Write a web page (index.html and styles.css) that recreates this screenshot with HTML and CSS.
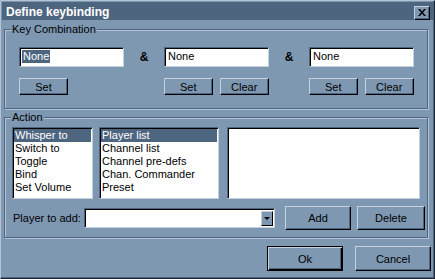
FILE: index.html
```html
<!DOCTYPE html>
<html lang="en">
  <head>
    <meta charset="UTF-8" />
    <title>Define keybinding</title>
    <link rel="stylesheet" href="styles.css">
  </head>
  <body>
    <div class="window">
      <div class="titlebar">
        <span class="title">Define keybinding</span>
        <button class="close-btn" aria-label="Close">
          <svg width="8" height="7" viewBox="0 0 8 7">
            <path d="M0 0h2l2 2.5L6 0h2L5 3.5 8 7H6L4 4.5 2 7H0l3-3.5z" fill="#000" />
          </svg>
        </button>
      </div>
      <div class="client">
        <fieldset class="group">
          <legend>Key Combination</legend>
          <div class="group-body keys">
            <div class="key-col">
              <div class="edit"><span class="sel">None</span></div>
              <div class="btn-row">
                <button class="btn">Set</button>
              </div>
            </div>
            <div class="amp">&amp;</div>
            <div class="key-col">
              <div class="edit"><span>None</span></div>
              <div class="btn-row">
                <button class="btn">Set</button>
                <button class="btn clear">Clear</button>
              </div>
            </div>
            <div class="amp">&amp;</div>
            <div class="key-col">
              <div class="edit"><span>None</span></div>
              <div class="btn-row">
                <button class="btn">Set</button>
                <button class="btn clear">Clear</button>
              </div>
            </div>
          </div>
        </fieldset>
        <fieldset class="group action">
          <legend>Action</legend>
          <div class="group-body">
            <div class="lists">
              <ul class="listbox list-type">
                <li class="selected">Whisper to</li>
                <li>Switch to</li>
                <li>Toggle</li>
                <li>Bind</li>
                <li>Set Volume</li>
              </ul>
              <ul class="listbox list-target">
                <li class="selected">Player list</li>
                <li>Channel list</li>
                <li>Channel pre-defs</li>
                <li>Chan. Commander</li>
                <li>Preset</li>
              </ul>
              <ul class="listbox list-items"></ul>
            </div>
            <div class="player-row">
              <label class="player-label">Player to add:</label>
              <div class="combo">
                <span class="combo-text"></span>
                <span class="combo-arrow"></span>
              </div>
              <button class="btn big add">Add</button>
              <button class="btn big delete">Delete</button>
            </div>
          </div>
        </fieldset>
        <div class="dialog-buttons">
          <button class="btn big default">Ok</button>
          <button class="btn big">Cancel</button>
        </div>
      </div>
    </div>
  </body>
</html>
```

FILE: styles.css
```css
body {
  margin: 0;
  background-color: #7f98b2;
  font-family: "Liberation Sans", Arial, sans-serif;
  font-size: 11px;
  color: #000;
}
.window {
  width: 435px;
  height: 279px;
  box-sizing: border-box;
  background-color: #7f98b2;
  border: 1px solid;
  border-color: #b4c4d4 #1c2631 #1c2631 #b4c4d4;
  box-shadow: inset -1px -1px 0 #4e6580;
  padding: 1px;
}
.titlebar {
  height: 18px;
  background-color: #4e6580;
  display: flex;
  align-items: center;
  justify-content: space-between;
  padding: 0 3px 0 4px;
}
.title {
  color: #fff;
  font-weight: bold;
  font-size: 12px;
  margin-top: 2px;
}
.close-btn {
  width: 16px;
  height: 14px;
  margin-top: 3px;
  padding: 0;
  display: flex;
  align-items: center;
  justify-content: center;
  background-color: #7f98b2;
  border: 1px solid;
  border-color: #c4d2e0 #000 #000 #c4d2e0;
  box-shadow: inset -1px -1px 0 #4e6580;
}
.client {
  padding: 0 2px;
}
.group {
  margin: 3px 3px 0 0;
  padding: 0;
  border: 1px solid #4e6580;
  box-shadow: inset 1px 1px 0 #b4c4d4, 1px 1px 0 #b4c4d4;
}
.group legend {
  margin-left: 6px;
  padding: 0 1px;
  line-height: 13px;
  background-color: #7f98b2;
}
.group.action {
  margin-top: 2px;
}
.group-body {
  padding: 3px 0 7px 7px;
}
.keys {
  display: flex;
  padding: 11px 0 13px 14px;
}
.key-col {
  width: 105px;
}
.amp {
  width: 40px;
  text-align: center;
  font-weight: bold;
  font-size: 12px;
  line-height: 20px;
}
.edit {
  box-sizing: border-box;
  height: 20px;
  background-color: #fff;
  border: 1px solid;
  border-color: #4e6580 #c4d2e0 #c4d2e0 #4e6580;
  box-shadow: inset 1px 1px 0 #000;
  padding: 2px 0 0 2px;
  line-height: 13px;
}
.edit span {
  padding: 0 1px;
  display: inline-block;
}
.edit .sel {
  background-color: #4e6580;
  color: #fff;
}
.btn-row {
  display: flex;
  gap: 7px;
  margin-top: 11px;
}
.btn {
  box-sizing: border-box;
  width: 49px;
  height: 17px;
  padding: 0;
  font: inherit;
  color: #000;
  background-color: #7f98b2;
  border: 1px solid;
  border-color: #c4d2e0 #000 #000 #c4d2e0;
  box-shadow: inset -1px -1px 0 #4e6580;
}
.btn.clear {
  width: 50px;
}
.btn.big {
  height: 24px;
}
.lists {
  display: flex;
}
.listbox {
  box-sizing: border-box;
  height: 72px;
  margin: 0;
  padding: 1px;
  list-style: none;
  background-color: #fff;
  border: 1px solid;
  border-color: #4e6580 #c4d2e0 #c4d2e0 #4e6580;
  box-shadow: inset 1px 1px 0 #000;
}
.listbox li {
  height: 13px;
  line-height: 13px;
  padding-left: 1px;
  white-space: nowrap;
}
.listbox li.selected {
  background-color: #4e6580;
  color: #fff;
}
.list-type {
  width: 81px;
}
.list-target {
  width: 120px;
  margin-left: 6px;
}
.list-items {
  width: 193px;
  margin-left: 8px;
}
.player-row {
  display: flex;
  align-items: center;
  margin-top: 7px;
}
.player-label {
  width: 71px;
  padding-left: 1px;
}
.combo {
  box-sizing: border-box;
  width: 191px;
  height: 20px;
  display: flex;
  justify-content: flex-end;
  padding: 2px 1px 1px 2px;
  background-color: #fff;
  border: 1px solid;
  border-color: #4e6580 #c4d2e0 #c4d2e0 #4e6580;
  box-shadow: inset 1px 1px 0 #000;
}
.combo-arrow {
  box-sizing: border-box;
  width: 12px;
  display: flex;
  align-items: center;
  justify-content: center;
  background-color: #7f98b2;
  border: 1px solid;
  border-color: #c4d2e0 #000 #000 #c4d2e0;
}
.combo-arrow::after {
  content: "";
  border-left: 3px solid transparent;
  border-right: 3px solid transparent;
  border-top: 3px solid #000;
}
.add {
  width: 66px;
  margin-left: 10px;
}
.delete {
  width: 68px;
  margin-left: 6px;
}
.dialog-buttons {
  display: flex;
  justify-content: flex-end;
  gap: 12px;
  margin-top: 8px;
}
.dialog-buttons .btn {
  width: 76px;
  height: 25px;
}
.btn.default {
  border-color: #000;
  box-shadow: inset 1px 1px 0 #c4d2e0, inset -1px -1px 0 #000, inset -2px -2px 0 #4e6580;
}
```
